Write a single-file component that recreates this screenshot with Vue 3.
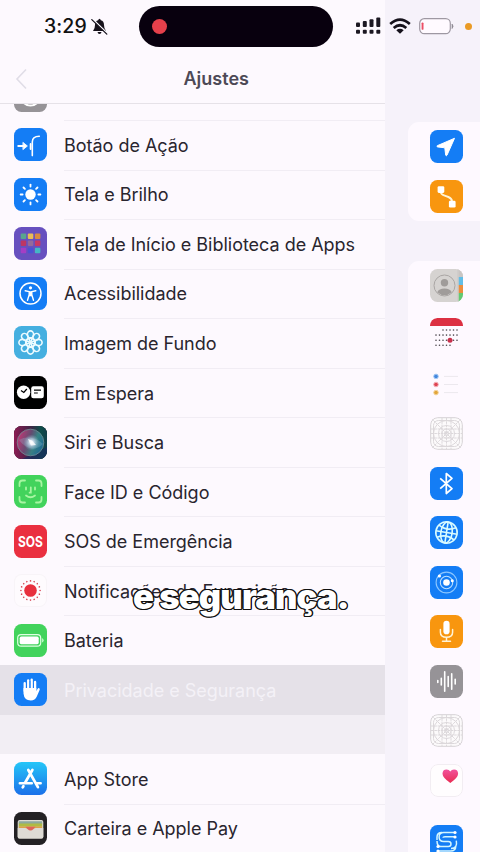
<script setup>
const petals = Array.from({ length: 8 }, (_, i) => `<ellipse cx="16.5" cy="8.4" rx="3.1" ry="3.5" transform="rotate(${i * 45} 16.5 16.5)"/>`).join('')
const innerPetals = Array.from({ length: 8 }, (_, i) => `<path d="M16.5 15.5v-3.2" transform="rotate(${i * 45 + 22.5} 16.5 16.5)"/>`).join('')
const rays = Array.from({ length: 8 }, (_, i) => `<path d="M16.5 8.6V6.6" transform="rotate(${i * 45} 16.5 16.5)"/>`).join('')
const rings = (n, r, s) => Array.from({ length: n }, (_, i) => `<circle cx="16.5" cy="${16.5 - r}" r="${s}" transform="rotate(${i * 360 / n} 16.5 16.5)"/>`).join('')

const tiles = ['#58a58e', '#e9bd55', '#d88b41', '#bd3664', '#946a9b', '#c83864', '#a43ec4', '#4a52d2', '#45b6c5']
const tileRects = tiles.map((c, i) => `<rect x="${6.7 + (i % 3) * 7.1}" y="${6.5 + Math.floor(i / 3) * 7.1}" width="5.5" height="5.5" rx="1" fill="${c}"/>`).join('')

const calendarDots = []
for (let r = 0; r < 4; r++) {
  for (let c = 0; c < 7; c++) {
    if ((r === 0 && c < 2) || (r === 3 && c > 4)) continue
    calendarDots.push(`<circle cx="${6 + c * 3.5}" cy="${12 + r * 5.1}" r=".8"/>`)
  }
}

const grid = `<rect x=".7" y=".7" width="31.6" height="31.6" rx="7" fill="#fcfafb" stroke="#d6d2d5" stroke-width="1"/>
  <g fill="none" stroke="#dcd8db" stroke-width="1"><rect x="3.5" y="3.5" width="26" height="26" rx="5"/><circle cx="16.5" cy="16.5" r="13"/><circle cx="16.5" cy="16.5" r="8"/><circle cx="16.5" cy="16.5" r="4.6"/><circle cx="16.5" cy="16.5" r="2"/>
  <path d="M1 1l31 31M32 1L1 32M1 12h31M1 21h31M12 1v31M21 1v31M1 16.5h31M16.5 1v31" stroke-dasharray="2.6 .7"/></g>`

const art = {
  general: '<g fill="none" stroke="#fff" stroke-width="2"><circle cx="16.5" cy="16.500" r="10"/></g>',
  action: '<g fill="none" stroke="#fff" stroke-width="1.8" stroke-linecap="round" stroke-linejoin="round"><path d="M4.2 18h6"/><path d="M9.2 14.6l4.2 3.4-4.2 3.4z" fill="#fff" stroke-width=".8"/><path d="M25.3 8.2c-4.6 0-7 1.6-7 5.7V27.6" stroke-width="1.6"/><path d="M16.6 16v5" stroke-width="1.8"/></g>',
  sun: `<circle cx="16.5" cy="16.5" r="5.2" fill="#fff"/><g stroke="#fff" stroke-width="1.8" stroke-linecap="round">${rays}</g>`,
  home: tileRects,
  access: '<circle cx="16.5" cy="16.5" r="10.5" fill="none" stroke="#fff" stroke-width="1.5"/><circle cx="16.5" cy="10.8" r="1.6" fill="#fff"/><path d="M11.2 13.8l4 .8v3.100l-1.700 5.600M21.800 13.800l-4 .8v3.100l1.700 5.600" fill="none" stroke="#fff" stroke-width="1.4" stroke-linecap="round" stroke-linejoin="round"/><path d="M15 14.200h3v5h-3z" fill="#fff"/>',
  flower: `<g fill="none" stroke="#ecfbff" stroke-width="1.6">${petals}<circle cx="16.5" cy="16.5" r="4.4"/>${innerPetals}</g><circle cx="16.5" cy="16.5" r="1.6" fill="#ecfbff"/>`,
  standby: '<circle cx="9.6" cy="16.3" r="6.7" fill="#fff"/><path d="M7 14.5l2.8 2 3-3.5" fill="none" stroke="#000" stroke-width="1.3"/><rect x="17.2" y="10.3" width="12.6" height="12" rx="2.2" fill="#fff"/><path d="M20 14.1h7M20 17h3.8" stroke="#000" stroke-width="1.2"/>',
  siri: '<defs><linearGradient id="sb"><stop offset="0" stop-color="#8d1c54"/><stop offset=".5" stop-color="#402346"/><stop offset=".8" stop-color="#0e4d49"/><stop offset="1" stop-color="#123f4a"/></linearGradient><radialGradient id="sg"><stop offset="0" stop-color="#fff"/><stop offset=".28" stop-color="#dbe8f5" stop-opacity=".85"/><stop offset="1" stop-color="#8db6cf" stop-opacity="0"/></radialGradient><linearGradient id="so" x1="0" y1=".3" x2="1" y2=".7"><stop offset="0" stop-color="#d13c7d"/><stop offset=".4" stop-color="#6b5379"/><stop offset=".65" stop-color="#3b8f8f"/><stop offset="1" stop-color="#1f6ba3"/></linearGradient></defs><rect width="33" height="33" fill="url(#sb)"/><path d="M8 33h25V21z" fill="#192d61" opacity=".7"/><circle cx="16.5" cy="16.5" r="13.3" fill="url(#so)" opacity=".85" stroke="#76969c" stroke-width=".9"/><path d="M5 14c8-5 18-2 24 4-8 8-17 5-24-4z" fill="#8bb9d1" opacity=".3"/><circle cx="17.500" cy="16.5" r="8" fill="url(#sg)"/><path d="M14 13l4 1.500 4 4.500-5 .5z" fill="#fff" opacity=".8"/>',
  face: '<g fill="none" stroke="#a7f5a2" stroke-width="1.8" stroke-linecap="round"><path d="M5.5 11V8.5q0-3 3-3H11M22 5.500h2.500q3 0 3 3V11M27.500 22v2.500q0 3-3 3H22M11 27.500H8.500q-3 0-3-3V22"/><path d="M12 12.500v2M21 12.500v2M16.800 12.500v5.200h-1.200M12 20.500q4.500 3.500 9 0"/></g>',
  sos: '<text x="16.5" y="21.600" text-anchor="middle" textLength="25" lengthAdjust="spacingAndGlyphs" font-size="14.5" font-weight="700" fill="#fff">SOS</text>',
  exposure: `<circle cx="16.5" cy="16.5" r="6.3" fill="#e8303e"/><g fill="#d84452">${rings(16, 9.6, .8)}</g>`,
  battery: '<rect x="3.7" y="10.6" width="23" height="11.6" rx="3.4" fill="none" stroke="#dfffe2" stroke-width="1.2"/><rect x="5.7" y="12.600" width="19" height="7.600" rx="1.6" fill="#fff"/><path d="M28.400 14.600q2 1.800 0 3.600z" fill="#c9fbd0" stroke="#c9fbd0" stroke-width=".7"/>',
  hand: '<path d="M10.700 18V10.200M14.200 17V7.300M17.700 17V6.600M21.100 18V9" stroke="#fff" stroke-width="2.300" stroke-linecap="round" fill="none"/><path d="M9.500 15h12.800v3.300l1.200-2.400q1-1.500 2.100-.4.4.6-.1 1.700l-2.700 6.200q-1.700 4-6 4-6.600 0-7.300-7z" fill="#fff"/><path d="M12.500 15V10M16 15V8M19.500 15V10" stroke="#1578f2" stroke-width=".7"/>',
  store: '<g fill="none" stroke="#fff" stroke-width="2.700" stroke-linecap="round"><path d="M14.300 8L23.900 25.200M18.400 8L11.200 20.500M9.400 24.200l-.7 1.200"/><path d="M5.800 21.200h12M22.500 21.200h4.200" stroke-width="2.500"/></g>',
  wallet: '<rect x="3.700" y="8" width="25.600" height="18.600" rx="2" fill="#dfdbd2"/><path d="M4.800 9.200h23.400v3H4.800z" fill="#8ca99c"/><path d="M4.800 11.500h23.400v3.200H4.800z" fill="#b0bb42"/><path d="M4.800 14.600h23.400v2H4.800z" fill="#dca04b"/><path d="M3.700 16h6.800q1.800 0 2.500 1.200 3.500 4 7 0 .7-1.200 2.500-1.200h6.800v9q0 1.600-2 1.600H5.700q-2 0-2-1.600z" fill="#dedbd5"/><path d="M11.500 14.800h10q-1.500 1.200-2 2.200-3 3-6 0-.5-1-2-2.200z" fill="#df645a"/>',
  location: '<path d="M24.500 8.300L7.300 15.700q-1 .7.300 1.200l7.200.9.900 7.400q.5 1.100 1.300 0z" fill="#fff" stroke="#fff" stroke-linejoin="round"/>',
  route: '<path d="M10.900 12.500q.2 2 3.800 3.200l3.700 1.300q3.500 1.400 3.600 4.500" fill="none" stroke="#fff3d5" stroke-width="1.900"/><rect x="7.600" y="6.200" width="6.700" height="6.700" rx="1.300" fill="#fff"/><rect x="18.900" y="20.800" width="6.700" height="6.700" rx="1.300" fill="#fff"/>',
  contacts: '<rect width="33" height="33" fill="#d6d3d1"/><path d="M28.500 8h4.500v8h-4.500z" fill="#62bde6"/><path d="M28.500 16h4.500v8h-4.500z" fill="#ec8d3e"/><path d="M28.500 24h4.500v9h-4.500z" fill="#62ca71"/><path d="M28.500 0h4.500v8h-4.500z" fill="#c9c5c3"/><path d="M28 0v33" stroke="#cbc7c5"/><circle cx="14.500" cy="16.500" r="10.500" fill="none" stroke="#aaa6a4"/><circle cx="14.500" cy="13.800" r="3.700" fill="#a09c9a"/><path d="M7.200 23.200q1.800-3.700 7.300-3.700t7.300 3.700q-7.300 6-14.600 0z" fill="#a09c9a"/>',
  calendar: `<path d="M0 8V7q0-7 7-7h19q7 0 7 7v1z" fill="#dc3042"/><g fill="#4b464d">${calendarDots.join('')}</g><circle cx="20" cy="22.200" r="2.500" fill="#c8304b"/>`,
  reminders: '<g stroke-width="1"><circle cx="6" cy="8.400" r="2.300" fill="#4387df" stroke="#a9cbf3"/><circle cx="6" cy="16.500" r="2.300" fill="#df4353" stroke="#f3b1b8"/><circle cx="6" cy="24.600" r="2.300" fill="#e3a63a" stroke="#f3d59e"/></g><path d="M14 8.400h14M14 16.500h14M14 24.600h14" stroke="#ece8ee"/>',
  grid,
  bluetooth: '<path d="M10.200 11.300L22 21.700 16.300 26.500V6.500L22 11.300 10.200 21.700" fill="none" stroke="#fff" stroke-width="1.700" stroke-linejoin="round"/>',
  globe: '<g fill="none" stroke="#d9fbff" stroke-width="1.600" transform="rotate(9 16.500 16.500)"><circle cx="16.500" cy="16.500" r="10.700"/><ellipse cx="16.500" cy="16.500" rx="5.700" ry="10.700"/><path d="M16.500 5.800v21.400M5.800 16.500h21.400M8 10.400q8.500 5 17 0M8 22.600q8.500-5 17 0"/></g>',
  research: '<g fill="none" stroke="#8bc6ff" stroke-width="1.100"><circle cx="16.500" cy="16.500" r="10.400"/><circle cx="16.500" cy="16.500" r="6.200" stroke="#bce0ff"/></g><circle cx="16.500" cy="16.500" r="3.300" fill="#fff"/><circle cx="9.400" cy="10" r="1.600" fill="#fff"/><circle cx="22.300" cy="14.700" r="1.500" fill="#fff"/>',
  mic: '<rect x="13.400" y="5.800" width="6.200" height="13.500" rx="3.100" fill="#fff"/><path d="M10.400 14.500v2.800q0 5 6.100 5t6.100-5v-2.800M16.500 22.500v3.700M12.500 26.200h8" fill="none" stroke="#fff3d7" stroke-width="1.500" stroke-linecap="round"/>',
  wave: '<path d="M7.800 15.500v2M11.300 13.200v6.800M14.700 6.800v19.400M18.200 11.500v10M21.700 8.700v15.500M25.200 14.200v4.800" stroke="#fff" stroke-width="1.600" stroke-linecap="round"/>',
  health: '<defs><linearGradient id="ht" x2="0" y2="1"><stop stop-color="#f2529d"/><stop offset="1" stop-color="#e92c52"/></linearGradient></defs><rect x=".5" y=".5" width="32" height="32" rx="7.500" fill="#fffdfe" stroke="#f2edf2"/><path d="M20.300 18.900q-7.800-5.300-7.800-9.200 0-4.300 4.100-4.300 2.400 0 3.700 2 1.300-2 3.700-2 4.100 0 4.100 4.300 0 3.900-7.800 9.200z" fill="url(#ht)"/>',
  sensor: '<g fill="none" stroke="#d2f5ff" stroke-width="1.500"><path d="M24.500 7.500H13.800q-4.700 0-4.700 4.500t4.700 4.500h4.500q2.700 0 2.700 2.500t-2.700 2.500H8.500M24.500 11.800H15q-2 0-2 .9M26.300 15.600q1.500 7.900-5.300 7.900M7 16q0 5.500 4 5.500M8.500 26h12q5.300 0 5.300-5M7 15V12q0-4.500 5-4.500"/></g><g fill="#fff"><circle cx="25" cy="7.500" r="1.600"/><circle cx="25" cy="12" r="1.600"/><circle cx="8" cy="21.500" r="1.600"/><circle cx="8" cy="26" r="1.600"/></g>'
}

const rows = [
  { icon: 'action', bg: 'blue', label: 'Botão de Ação' },
  { icon: 'sun', bg: 'blue', label: 'Tela e Brilho' },
  { icon: 'home', bg: 'purple', label: 'Tela de Início e Biblioteca de Apps' },
  { icon: 'access', bg: 'blue', label: 'Acessibilidade' },
  { icon: 'flower', bg: 'cyan', label: 'Imagem de Fundo' },
  { icon: 'standby', bg: 'black', label: 'Em Espera' },
  { icon: 'siri', bg: 'black', label: 'Siri e Busca' },
  { icon: 'face', bg: 'green', label: 'Face ID e Código' },
  { icon: 'sos', bg: 'red', label: 'SOS de Emergência' },
  { icon: 'exposure', bg: 'plain', label: 'Notificações de Exposição' },
  { icon: 'battery', bg: 'green', label: 'Bateria' },
  { icon: 'hand', bg: 'blue', label: 'Privacidade e Segurança', active: true }
]
const storeRows = [
  { icon: 'store', bg: 'store', label: 'App Store' },
  { icon: 'wallet', bg: 'wallet', label: 'Carteira e Apple Pay' }
]
const firstCard = [['location', 'blue'], ['route', 'orange']]
const secondCard = [
  ['contacts', 'none'], ['calendar', 'none'], ['reminders', 'none'], ['grid', 'none'], ['bluetooth', 'blue'], ['globe', 'blue'],
  ['research', 'blue'], ['mic', 'orange'], ['wave', 'gray'], ['grid', 'none'], ['health', 'none'], ['sensor', 'blue']
]
</script>

<template>
  <div class="screen">
    <div class="main">
      <header class="nav">
        <svg class="back" viewBox="0 0 12 22"><path d="M11 1.500L2 11l9 9.500" /></svg>
        <h1>Ajustes</h1>
      </header>
      <div class="peek"><svg class="icon gray" viewBox="0 0 33 33" v-html="art.general"></svg></div>
      <ul class="list">
        <li v-for="r in rows" :key="r.label" :class="{ active: r.active }">
          <svg class="icon" :class="r.bg" viewBox="0 0 33 33" v-html="art[r.icon]"></svg>
          <span class="label">{{ r.label }}</span>
        </li>
      </ul>
      <div class="gap"></div>
      <ul class="list">
        <li v-for="r in storeRows" :key="r.label">
          <svg class="icon" :class="r.bg" viewBox="0 0 33 33" v-html="art[r.icon]"></svg>
          <span class="label">{{ r.label }}</span>
        </li>
      </ul>
    </div>
    <aside class="side">
      <div class="card">
        <div v-for="(c, i) in firstCard" :key="i" class="cell">
          <svg class="icon" :class="c[1]" viewBox="0 0 33 33" v-html="art[c[0]]"></svg>
        </div>
      </div>
      <div class="card tall">
        <div v-for="(c, i) in secondCard" :key="i" class="cell">
          <svg class="icon" :class="c[1]" viewBox="0 0 33 33" v-html="art[c[0]]"></svg>
        </div>
      </div>
    </aside>

    <div class="status">
      <span class="time">3:29</span>
      <svg class="bell" viewBox="0 0 17 17"><path d="M2 13q2-2.200 2-6 0-4.200 3.200-4.800Q7.500.7 8.500.7t1.300 1.500Q13 2.800 13 7q0 3.800 2 6zM6.500 14h4q-.4 2-2 2t-2-2z" fill="#16121b" /><path d="M1.300 .8l15 14.500" stroke="#fcfaff" stroke-width="1.600" /><path d="M.8 1.600l15 14.500" stroke="#16121b" stroke-width="1.300" stroke-linecap="round" /></svg>
      <div class="island"><i></i></div>
      <svg class="signal" viewBox="0 0 25 18"><g fill="#1c1822"><rect x="0" y="5.500" width="4" height="4.500" rx="1" /><rect x="6.800" y="4" width="4" height="6" rx="1" /><rect x="13.500" y="2.300" width="4" height="7.700" rx="1" /><rect x="20.300" y=".5" width="4" height="9.500" rx="1" /><rect x="0" y="12.800" width="4" height="4" rx="1" /><rect x="6.800" y="12.800" width="4" height="4" rx="1" /><rect x="13.500" y="12.800" width="4" height="4" rx="1" /><rect x="20.300" y="12.800" width="4" height="4" rx="1" /></g></svg>
      <svg class="wifi" viewBox="0 0 22 16"><g fill="none" stroke="#15111b" stroke-width="2.700"><path d="M1.200 6Q11-2.600 20.800 6M4.700 10Q11 4.500 17.300 10" /></g><path d="M7.300 12.200q3.700-2.700 7.400 0L11 15.800z" fill="#15111b" /></svg>
      <svg class="batt" viewBox="0 0 36 17"><rect x=".7" y=".7" width="30.600" height="15" rx="4.600" fill="#fffaff" stroke="#9e98a2" stroke-width="1.200" /><rect x="2.600" y="4.400" width="1.900" height="7.400" rx=".9" fill="#ec4e66" /><path d="M33 6q2.300 2.200 0 4.600z" fill="#8f8993" stroke="#8f8993" stroke-width=".6" /></svg>
      <i class="dot"></i>
    </div>

    <div class="caption">e segurança.</div>
  </div>
</template>

<style>
body { margin: 0; overflow: hidden; }
</style>
<style scoped>
.screen { position: relative; display: flex; width: 480px; height: 852px; overflow: hidden; background: #f6f2fa; font-family: Inter, "Liberation Sans", sans-serif; }
.main { width: 385px; flex: none; display: flex; flex-direction: column; background: #fdf9fe; }
.nav { flex: none; box-sizing: border-box; height: 104px; padding: 54px 136px 0 15px; display: flex; align-items: center; border-bottom: 1px solid #e6e2e8; }
.back { width: 12px; height: 22px; fill: none; stroke: #e0dde7; stroke-width: 1.6; }
h1 { flex: 1; margin: 0; text-align: right; font-size: 18px; line-height: 24px; font-weight: 600; letter-spacing: .02px; color: #4d4956; }
.peek { flex: none; box-sizing: border-box; height: 16px; padding: 0 14px; overflow: hidden; display: flex; align-items: flex-end; padding-bottom: 8px; }
.list { flex: none; list-style: none; margin: 0; padding: 0; }
.list li { height: 49.55px; box-sizing: border-box; display: flex; align-items: center; gap: 17px; padding-left: 14px; }
.list .label { flex: 1; height: 100%; box-sizing: border-box; display: flex; align-items: center; border-top: 1px solid #f1edf4; font-size: 18px; letter-spacing: -.02px; color: #29252e; white-space: nowrap; }
.icon { display: block; flex: none; width: 33px; height: 33px; border-radius: 7.5px; overflow: hidden; }
.list .active { background: #e5e1e8; }
.list .active .label { color: #f4f1f7; border-color: transparent; }
.gap { flex: none; height: 39.5px; background: #f2eef4; }
.gap + .list li:first-child .label { border-color: transparent; }
.blue { background: #147df5; }
.purple { background: #6750bf; }
.cyan { background: #45afe0; }
.black { background: #000; }
.green { background: #42d35c; }
.red { background: #ea3040; }
.plain { background: #fefbfe; box-shadow: inset 0 0 0 1px #f8f4f8; }
.store { background: linear-gradient(#25c6f8, #1b70e9); }
.wallet { background: #232124; }
.orange { background: #f8960f; }
.gray { background: #969397; }
.side { flex: 1; padding: 122px 0 0 23px; display: flex; flex-direction: column; gap: 40px; }
.card { flex: none; border-radius: 11px 0 0 11px; background: #fef9ff; }
.card.tall { padding-bottom: 40px; }
.cell { height: 49.5px; display: flex; align-items: center; padding-left: 22px; }
.tall .cell:last-child { padding-top: 12px; }
.tall .cell:first-child { height: 49px; }
.status { position: absolute; left: 0; top: 5px; width: 480px; height: 42px; display: flex; align-items: center; }
.time { width: 47px; margin-left: 44px; font-size: 19.5px; font-weight: 500; letter-spacing: .1px; color: #111; }
.bell { width: 17px; height: 17px; margin-right: 31px; }
.island { width: 194px; height: 41px; border-radius: 21px; background: #08000e; display: flex; align-items: center; box-sizing: border-box; padding-left: 13px; }
.island i { width: 15px; height: 15px; border-radius: 50%; background: #e5404b; }
.signal { width: 25px; height: 18px; margin-left: 23px; }
.wifi { width: 22px; height: 16px; margin-left: 8px; }
.batt { width: 36px; height: 17px; margin-left: 8px; }
.dot { width: 7px; height: 7px; border-radius: 50%; background: #ea9a25; margin-left: 10px; }
.caption { position: absolute; left: 133px; top: 577px; font-size: 34.5px; line-height: 40px; font-weight: 900; letter-spacing: -.8px; color: #fff; white-space: nowrap; text-shadow: 1.3px 0 #111, -1.3px 0 #111, 0 1.3px #111, 0 -1.3px #111, 1px 1px #111, -1px 1px #111, 1px -1px #111, -1px -1px #111; }
</style>
